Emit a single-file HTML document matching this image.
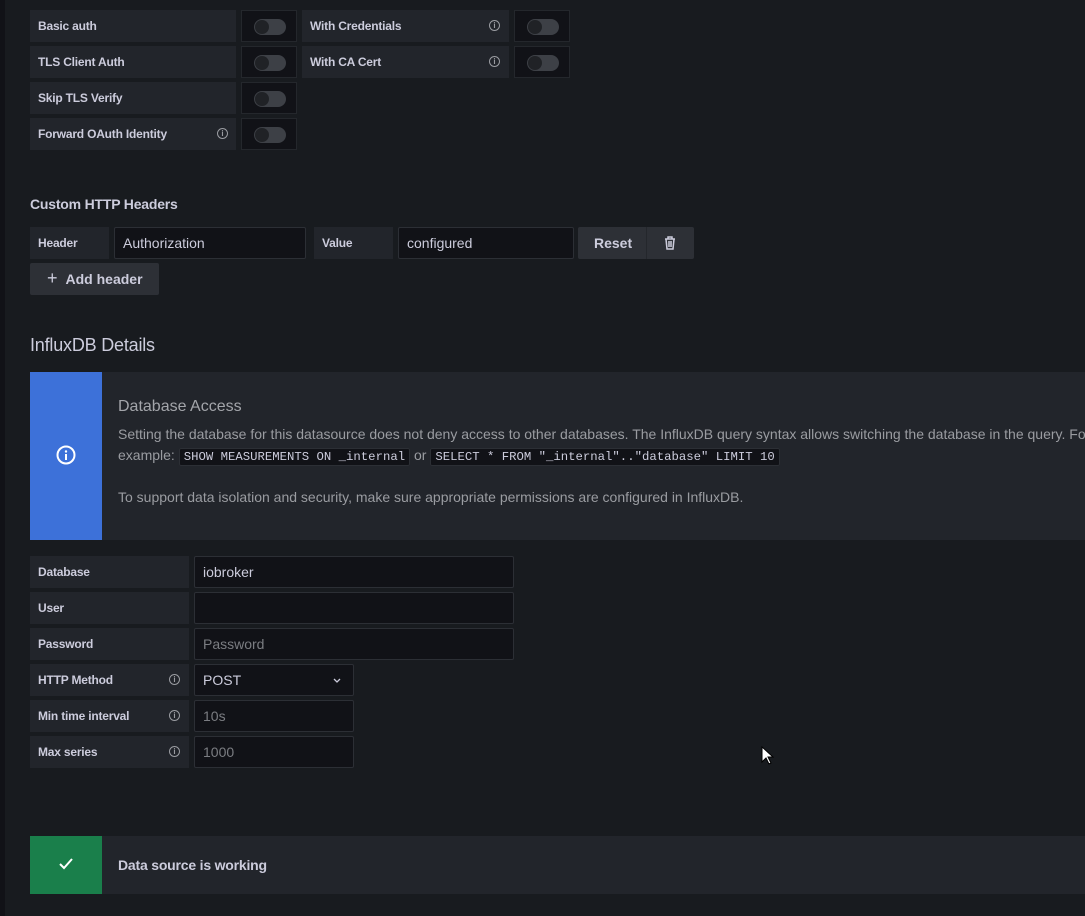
<!DOCTYPE html>
<html><head><style>
*{box-sizing:border-box;margin:0;padding:0}
body{width:1085px;height:916px;background:#181b1f;font-family:"Liberation Sans",sans-serif;color:#ccccdc;position:relative;overflow:hidden}
.strip{position:absolute;left:0;top:0;width:5px;height:916px;background:#111217}
.abs{position:absolute}
.lbl{position:absolute;background:#22252b;font-size:12px;font-weight:bold;color:#ccccdc;padding-left:8px;display:flex;align-items:center;height:32px;letter-spacing:-0.2px}
.inp{position:absolute;background:#111217;border:1px solid #2c2f35;border-radius:2px;height:32px;font-size:14px;padding-left:8px;display:flex;align-items:center;color:#ccccdc}
.ph{color:#7b7d82}
.tg{position:absolute;background:#111217;border:1px solid #24272c;width:56px;height:32px}
.tg:after{content:"";position:absolute;left:12px;top:8px;width:32px;height:16px;border-radius:8px;background:#3d4046}
.tg:before{content:"";position:absolute;left:13px;top:9px;width:14px;height:14px;border-radius:7px;background:#202226;z-index:1}
.ic{position:absolute;width:11px;height:11px;border:1px solid #9a9ca1;border-radius:50%;font-size:8px;color:#9a9ca1;text-align:center;line-height:9px;font-weight:bold}
code{font-family:'Liberation Mono',monospace;font-size:12.3px;background:#111217;color:#ccccdc;border:1px solid #2c2f35;border-radius:2px;padding:1px 4px}
</style></head><body>
<div class="strip"></div>

<div class="lbl" style="left:30px;top:10px;width:206px">Basic auth</div>
<div class="tg" style="left:241px;top:10px"></div>
<div class="lbl" style="left:302px;top:10px;width:207px">With Credentials</div>
<div class="ic" style="left:489px;top:20px">i</div>
<div class="tg" style="left:514px;top:10px"></div>

<div class="lbl" style="left:30px;top:46px;width:206px">TLS Client Auth</div>
<div class="tg" style="left:241px;top:46px"></div>
<div class="lbl" style="left:302px;top:46px;width:207px">With CA Cert</div>
<div class="ic" style="left:489px;top:56px">i</div>
<div class="tg" style="left:514px;top:46px"></div>

<div class="lbl" style="left:30px;top:82px;width:206px">Skip TLS Verify</div>
<div class="tg" style="left:241px;top:82px"></div>

<div class="lbl" style="left:30px;top:118px;width:206px">Forward OAuth Identity</div>
<div class="ic" style="left:217px;top:128px">i</div>
<div class="tg" style="left:241px;top:118px"></div>

<div class="abs" style="left:30px;top:196px;font-size:14px;font-weight:bold;color:#ccccdc;letter-spacing:-0.2px">Custom HTTP Headers</div>
<div class="lbl" style="left:30px;top:227px;width:79px">Header</div>
<div class="inp" style="left:114px;top:227px;width:192px">Authorization</div>
<div class="lbl" style="left:314px;top:227px;width:79px">Value</div>
<div class="inp" style="left:398px;top:227px;width:176px">configured</div>
<div class="abs" style="left:578px;top:227px;width:116px;height:32px;background:#2d3036;border-radius:2px;font-size:14px;font-weight:bold;color:#ccccdc;padding-left:16px;line-height:32px">Reset
<div class="abs" style="left:68px;top:0;width:1px;height:32px;background:#24272c"></div>
<svg class="abs" style="left:86px;top:9px" width="12" height="14" viewBox="0 0 12 14"><path d="M1 3h10M4 3V1h4v2M2 3l1 10h6l1-10M5 5v6M7 5v6" stroke="#ccccdc" stroke-width="1.5" fill="none"/></svg></div>
<div class="abs" style="left:30px;top:263px;width:129px;height:32px;background:#2d3036;border-radius:2px;font-size:14px;font-weight:bold;color:#ccccdc;line-height:31px;padding-left:17px"><span style="font-size:18px;font-weight:normal;margin-right:8px">+</span>Add header</div>

<div class="abs" style="left:30px;top:335px;font-size:18px;color:#ccccdc;letter-spacing:-0.2px">InfluxDB Details</div>
<div class="abs" style="left:30px;top:372px;width:1055px;height:168px;background:#22252b"></div>
<div class="abs" style="left:30px;top:372px;width:72px;height:168px;background:#3d71d9"></div>
<svg class="abs" style="left:56px;top:445px" width="20" height="20" viewBox="0 0 20 20"><circle cx="10" cy="10" r="8.5" stroke="#fff" stroke-width="2" fill="none"/><rect x="9" y="9" width="2" height="6" fill="#fff"/><circle cx="10" cy="6.5" r="1.2" fill="#fff"/></svg>
<div class="abs" style="left:118px;top:398px;font-size:16px;color:#a3a5aa">Database Access</div>
<div class="abs" style="left:118px;top:424px;font-size:14px;color:#9a9ca1;white-space:nowrap;line-height:21px">Setting the database for this datasource does not deny access to other databases. The InfluxDB query syntax allows switching the database in the query. For<br>example: <code>SHOW MEASUREMENTS ON _internal</code> or <code>SELECT * FROM "_internal".."database" LIMIT 10</code></div>
<div class="abs" style="left:118px;top:489px;font-size:14px;color:#9a9ca1">To support data isolation and security, make sure appropriate permissions are configured in InfluxDB.</div>

<div class="lbl" style="left:30px;top:556px;width:159px">Database</div>
<div class="inp" style="left:194px;top:556px;width:320px">iobroker</div>
<div class="lbl" style="left:30px;top:592px;width:159px">User</div>
<div class="inp" style="left:194px;top:592px;width:320px"></div>
<div class="lbl" style="left:30px;top:628px;width:159px">Password</div>
<div class="inp ph" style="left:194px;top:628px;width:320px">Password</div>
<div class="lbl" style="left:30px;top:664px;width:159px">HTTP Method</div>
<div class="ic" style="left:169px;top:674px">i</div>
<div class="inp" style="left:194px;top:664px;width:160px">POST<svg class="abs" style="left:138px;top:13px" width="8" height="6" viewBox="0 0 8 6"><path d="M1 1l3 3 3-3" stroke="#ccccdc" stroke-width="1.3" fill="none"/></svg></div>
<div class="lbl" style="left:30px;top:700px;width:159px">Min time interval</div>
<div class="ic" style="left:169px;top:710px">i</div>
<div class="inp ph" style="left:194px;top:700px;width:160px">10s</div>
<div class="lbl" style="left:30px;top:736px;width:159px">Max series</div>
<div class="ic" style="left:169px;top:746px">i</div>
<div class="inp ph" style="left:194px;top:736px;width:160px">1000</div>

<svg class="abs" style="left:761px;top:746px" width="13" height="20" viewBox="0 0 13 20"><path d="M1 1v15l4-4 3 6 2-1-3-6h5z" fill="#fff" stroke="#000" stroke-width="1"/></svg>

<div class="abs" style="left:30px;top:836px;width:1055px;height:58px;background:#22252b"></div>
<div class="abs" style="left:30px;top:836px;width:72px;height:58px;background:#1a7f4b"></div>
<svg class="abs" style="left:58px;top:857px" width="16" height="14" viewBox="0 0 16 14"><path d="M2 7l4 4 8-9" stroke="#fff" stroke-width="2" fill="none"/></svg>
<div class="abs" style="left:118px;top:857px;font-size:14px;font-weight:bold;color:#ccccdc;letter-spacing:-0.2px">Data source is working</div>
</body></html>
